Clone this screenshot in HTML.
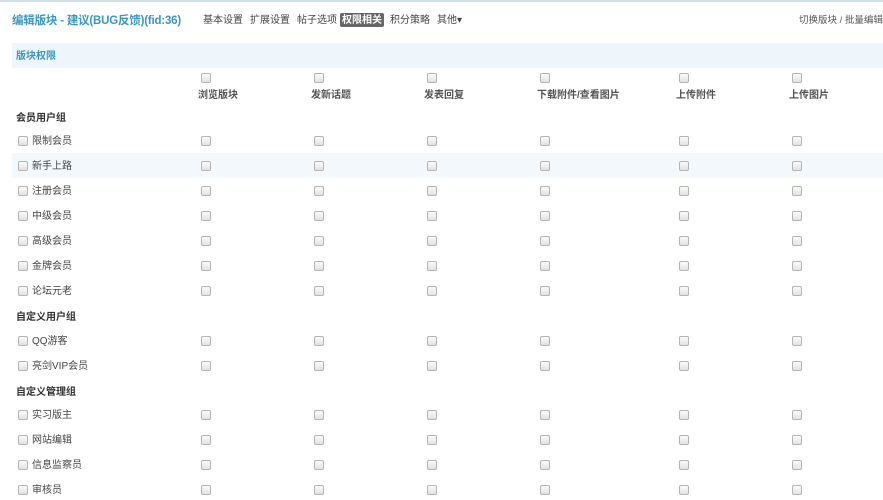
<!DOCTYPE html>
<html><head><meta charset="utf-8"><style>
body{margin:0;width:883px;height:500px;overflow:hidden;background:#fff;font-family:"Liberation Sans","Noto Sans CJK SC",sans-serif;position:relative;color:#333}
.a{position:absolute;white-space:nowrap;line-height:12px}
.cb{position:absolute;width:8px;height:8px;border:1px solid #b5b5b5;border-radius:2px;background:linear-gradient(#fafafa,#e2e2e2)}
.t{font-size:10px;color:#444}
</style></head><body>
<div class="a" style="left:0;top:0;width:883px;height:2px;background:#cfe0ea"></div>
<div class="a" style="left:12px;top:15px;font-size:11.5px;font-weight:bold;color:#3a97c0;letter-spacing:-0.2px">编辑版块 - 建议(BUG反馈)(fid:36)</div>
<div class="a t" style="left:203px;top:15px">基本设置</div>
<div class="a t" style="left:250px;top:15px">扩展设置</div>
<div class="a t" style="left:297px;top:15px">帖子选项</div>
<div class="a" style="left:340px;top:13px;width:44px;height:14px;background:#666;border-radius:2px;color:#fff;font-size:10px;font-weight:bold;text-align:center;line-height:15px">权限相关</div>
<div class="a t" style="left:390px;top:15px">积分策略</div>
<div class="a t" style="left:437px;top:15px">其他▾</div>
<div class="a t" style="left:799px;top:15px;color:#555;font-size:9.5px">切换版块 / 批量编辑</div>
<div class="a" style="left:12px;top:43px;width:871px;height:25px;background:#eef5fb"></div>
<div class="a" style="left:16px;top:51px;font-size:10px;color:#3a97c0;font-weight:bold">版块权限</div>
<div class="a" style="left:12px;top:153px;width:871px;height:25px;background:#f2f8fb"></div>
<div id="c"></div>
<script>
var cols=[205,318,431,544,683,796],lbl=["浏览版块","发新话题","发表回复","下载附件/查看图片","上传附件","上传图片"],h="";
cols.forEach(function(x,i){h+='<div class="cb" style="left:'+(x-4)+'px;top:73px"></div><div class="a t" style="left:'+(x-7)+'px;top:90px;font-weight:bold;color:#555">'+lbl[i]+'</div>';});
var rows=[["g","会员用户组",117],["r","限制会员",140],["r","新手上路",165],["r","注册会员",190],["r","中级会员",215],["r","高级会员",240],["r","金牌会员",265],["r","论坛元老",290],["g","自定义用户组",316],["r","QQ游客",340],["r","亮剑VIP会员",365],["g","自定义管理组",391],["r","实习版主",414],["r","网站编辑",439],["r","信息监察员",464],["r","审核员",489]];
rows.forEach(function(r){var y=r[2];if(r[0]=="g"){h+='<div class="a t" style="left:16px;top:'+(y-4)+'px;font-weight:bold;color:#333">'+r[1]+'</div>';}else{h+='<div class="cb" style="left:18px;top:'+(y-4)+'px"></div><div class="a t" style="left:32px;top:'+(y-4)+'px">'+r[1]+'</div>';cols.forEach(function(x){h+='<div class="cb" style="left:'+(x-4)+'px;top:'+(y-4)+'px"></div>';});}});
document.getElementById("c").innerHTML=h;
</script>
</body></html>
